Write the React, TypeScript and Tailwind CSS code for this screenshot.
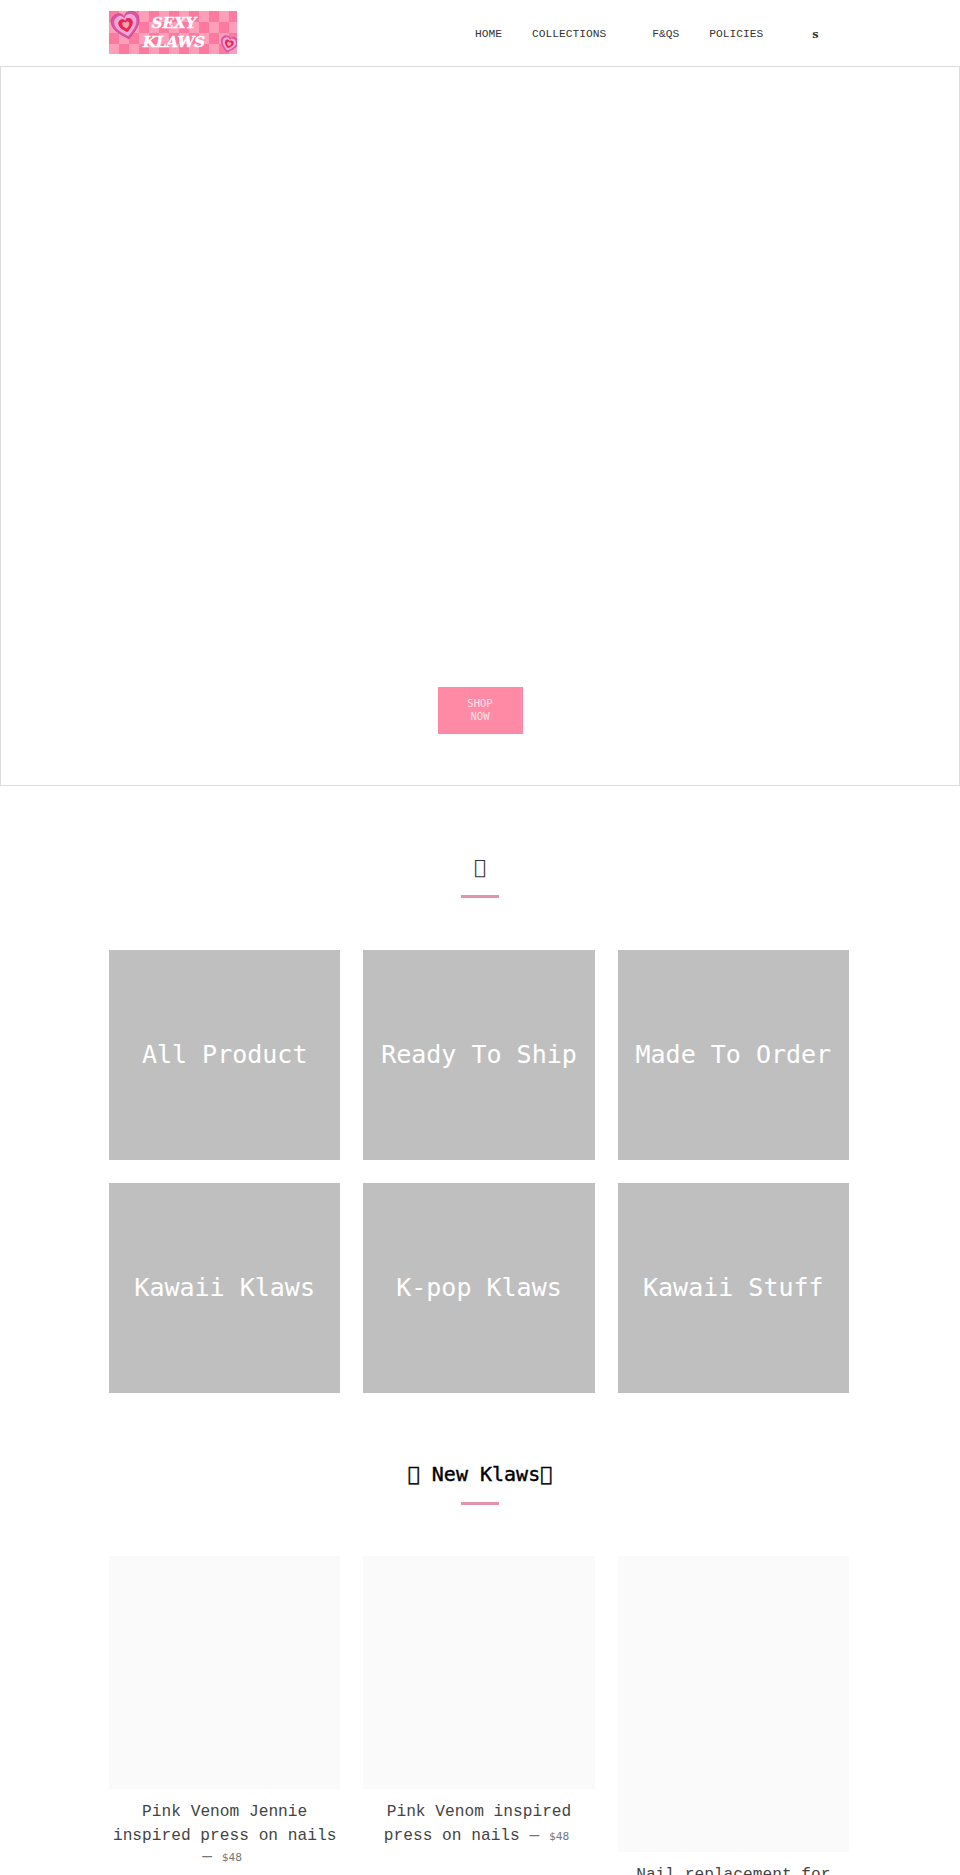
const mono = 'font-["DejaVu_Sans_Mono",monospace]';
const liberationMono = "font-['Liberation_Mono',monospace]";

const collections = ['All Product', 'Ready To Ship', 'Made To Order', 'Kawaii Klaws', 'K-pop Klaws', 'Kawaii Stuff'];

const checks = [
  [0, 0], [2, 0], [4, 0], [6, 0], [8, 0], [10, 0], [12, 0],
  [1, 1], [3, 1], [5, 1], [7, 1], [9, 1], [11, 1],
  [0, 2], [2, 2], [4, 2], [6, 2], [8, 2], [10, 2], [12, 2],
  [1, 3], [3, 3], [5, 3], [7, 3], [9, 3], [11, 3],
];

function Heart({ x, y, scale, rotate }: { x: number; y: number; scale: number; rotate: number }) {
  const d = 'M0 10C-5 6-10 2-10-3C-10-7-7-9-4-9C-2-9-1-8 0-6C1-8 2-9 4-9C7-9 10-7 10-3C10 2 5 6 0 10Z';
  return (
    <g transform={`translate(${x} ${y}) rotate(${rotate}) scale(${scale})`}>
      <path d={d} fill="#e0559f" stroke="#b04a86" strokeWidth="0.5" />
      <path d={d} fill="#f3a6dc" transform="scale(0.8)" />
      <path d={d} fill="#e8274f" transform="scale(0.52)" />
      <path d={d} fill="#f7a0b4" transform="scale(0.26)" />
    </g>
  );
}

function Logo() {
  return (
    <svg className="mt-[11px] self-start" width="128" height="43" viewBox="0 0 128 43">
      <rect width="128" height="43" fill="#fe9fb9" />
      {checks.map(([cx, cy]) => (
        <rect key={`${cx}-${cy}`} x={cx * 10} y={cy * 11} width="10" height="11" fill="#fc7a9f" />
      ))}
      <Heart x={17} y={14} scale={1.4} rotate={-12} />
      <Heart x={120} y={33} scale={0.85} rotate={14} />
      <text x="65" y="17" textAnchor="middle" fontFamily="'DejaVu Serif',serif" fontWeight="700" fontStyle="italic" fontSize="15" stroke="#fff" strokeWidth="0.4" fill="#fff">SEXY</text>
      <text x="65" y="36" textAnchor="middle" fontFamily="'DejaVu Serif',serif" fontWeight="700" fontStyle="italic" fontSize="15" stroke="#fff" strokeWidth="0.4" fill="#fff">KLAWS</text>
    </svg>
  );
}

function SectionTitle({ children, className }: { children: string; className: string }) {
  return (
    <div className="flex flex-col items-center">
      <h2 className={`${mono} text-[20px] leading-[28px] ${className}`}>{children}</h2>
      <div className="mt-[14px] h-[3px] w-[38px] bg-[#e592aa]" />
    </div>
  );
}

function Price() {
  return (
    <span className="text-[#777]">
      — <span className={`${mono} text-[11.2px]`}>$48</span>
      <span className="inline-block w-[5px]" />
    </span>
  );
}

function Product({ name, imageClass, price }: { name: string; imageClass: string; price?: 'inline' | 'below' }) {
  return (
    <div className={`${liberationMono} text-center text-[16.2px]`}>
      <div className={`w-full bg-[#fafafa] ${imageClass}`} />
      <p className="mt-[11px] leading-[24px] text-[#444]">
        {name} {price === 'inline' && <Price />}
      </p>
      {price === 'below' && <p className="leading-[19px]"><Price /></p>}
    </div>
  );
}

export default function App() {
  return (
    <div className="h-[1875px] overflow-hidden bg-white">
      <header className={`${liberationMono} flex h-[66px] items-center px-[109px] text-[11.25px] text-[#333]`}>
        <Logo />
        <nav className="ml-[238px] mt-[2px] flex items-center">
          <a>HOME</a>
          <a className="ml-[30px]">COLLECTIONS</a>
          <a className="ml-[46px]">F&amp;QS</a>
          <a className="ml-[30px]">POLICIES</a>
          <a className="ml-[49px] font-['DejaVu_Serif',serif] font-bold">s</a>
        </nav>
      </header>

      <section className="flex h-[720px] flex-col items-center justify-end border border-[#dddddd] pb-[51px]">
        <a className={`${mono} flex h-[47px] w-[85px] flex-col items-center justify-center bg-[#ff8aa6] pb-[2px] text-center text-[10.5px] leading-[13px] text-[#fde4ea]`}>
          <span>SHOP</span>
          <span>NOW</span>
        </a>
      </section>

      <section className="mt-[67px]">
        <SectionTitle className="text-[#333]">{'\u{10FFFD}'}</SectionTitle>
        <div className="ml-[109px] mt-[52px] grid w-[740px] grid-cols-3 gap-[23px]">
          {collections.map((title) => (
            <div key={title} className={`${mono} flex h-[210px] items-center justify-center bg-[#bfbfbf] text-[25px] text-white`}>
              {title}
            </div>
          ))}
        </div>
      </section>

      <section className="mt-[67px]">
        <SectionTitle className="text-black [-webkit-text-stroke:0.4px_black]">{'\u{10FFFD} New Klaws\u{10FFFD}'}</SectionTitle>
        <div className="ml-[109px] mt-[51px] grid w-[740px] grid-cols-3 items-start gap-x-[23px]">
          <Product name="Pink Venom Jennie inspired press on nails" imageClass="h-[233px]" price="below" />
          <Product name="Pink Venom inspired press on nails" imageClass="h-[233px]" price="inline" />
          <Product name="Nail replacement for" imageClass="h-[296px]" />
        </div>
      </section>
    </div>
  );
}
